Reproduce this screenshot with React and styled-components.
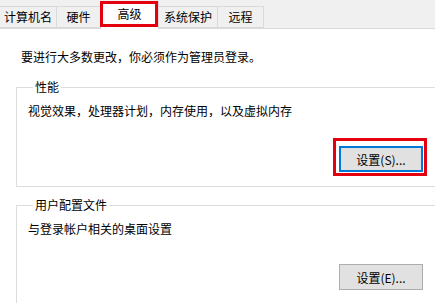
import React from "react";
import styled, { createGlobalStyle } from "styled-components";

const GlobalStyle = createGlobalStyle`
  html, body {
    margin: 0;
    padding: 0;
    background: #ffffff;
  }
  body {
    font-family: "Noto Sans CJK SC", "Liberation Sans", sans-serif;
    font-size: 12px;
    color: #000;
  }
`;

const tabs = [
  { label: "计算机名", width: 57 },
  { label: "硬件", width: 45 },
  { label: "高级", width: 59, active: true },
  { label: "系统保护", width: 60 },
  { label: "远程", width: 47 },
];

const Dialog = styled.div`
  width: 435px;
  height: 303px;
  overflow: hidden;
  background: #ffffff;
`;

const TabStrip = styled.div`
  display: flex;
  align-items: flex-end;
  height: 29px;
  background: #f0f0f0;
  border-bottom: 1px solid #d9d9d9;
  box-sizing: border-box;
`;

const Tab = styled.div`
  position: relative;
  display: flex;
  align-items: center;
  justify-content: center;
  box-sizing: border-box;
  width: ${(p) => p.$width}px;
  height: ${(p) => (p.$active ? 28 : 22)}px;
  margin-bottom: ${(p) => (p.$active ? -1 : 0)}px;
  margin-left: ${(p) => (p.$first ? 0 : -1)}px;
  padding-bottom: ${(p) => (p.$active ? 4 : 0)}px;
  background: ${(p) => (p.$active ? "#ffffff" : "#f0f0f0")};
  border: 1px solid #d9d9d9;
  border-bottom: ${(p) => (p.$active ? "none" : "1px solid #d9d9d9")};
  border-left: ${(p) => (p.$first ? "none" : "1px solid #d9d9d9")};
  z-index: ${(p) => (p.$active ? 2 : 1)};
  line-height: 16px;
  white-space: nowrap;

  ${(p) =>
    p.$active &&
    `
    &::after {
      content: "";
      position: absolute;
      left: -1px;
      right: 0;
      top: -1px;
      bottom: 2px;
      border: 3px solid #e3000f;
    }
  `}
`;

const Panel = styled.div`
  padding: 20px 0 0 0;
`;

const Intro = styled.p`
  margin: 0 0 15px 21px;
  line-height: 16px;
`;

const Group = styled.fieldset`
  margin: 0 -12px ${(p) => p.$gap || 0}px 16px;
  padding: 9px 23px 14px 10px;
  border: 1px solid #dcdcdc;
  min-width: 0;
  display: flex;
  flex-direction: column;
`;

const Legend = styled.legend`
  margin-left: 6px;
  padding: 0 2px;
  line-height: 14px;
`;

const Description = styled.div`
  line-height: 16px;
  padding-left: 1px;
`;

const ButtonRow = styled.div`
  display: flex;
  justify-content: flex-end;
  margin-top: 27px;
`;

const Button = styled.button`
  position: relative;
  width: 84px;
  height: 26px;
  box-sizing: border-box;
  background: #e1e1e1;
  border: ${(p) => (p.$focused ? "2px solid #0078d7" : "1px solid #adadad")};
  font-family: "Noto Sans CJK SC", "Liberation Sans", sans-serif;
  font-size: 12px;
  color: #000;
  padding: 0;

  ${(p) =>
    p.$marked &&
    `
    &::after {
      content: "";
      position: absolute;
      left: -8px;
      right: -6px;
      top: -10px;
      bottom: -6px;
      border: 3px solid #e3000f;
    }
  `}
`;

export default function App() {
  return (
    <Dialog>
      <GlobalStyle />
      <TabStrip>
        {tabs.map((t, i) => (
          <Tab key={t.label} $width={t.width} $active={t.active} $first={i === 0}>
            {t.label}
          </Tab>
        ))}
      </TabStrip>
      <Panel>
        <Intro>要进行大多数更改，你必须作为管理员登录。</Intro>
        <Group $gap={11}>
          <Legend>性能</Legend>
          <Description>视觉效果，处理器计划，内存使用，以及虚拟内存</Description>
          <ButtonRow>
            <Button $focused $marked>设置(S)...</Button>
          </ButtonRow>
        </Group>
        <Group>
          <Legend>用户配置文件</Legend>
          <Description>与登录帐户相关的桌面设置</Description>
          <ButtonRow>
            <Button>设置(E)...</Button>
          </ButtonRow>
        </Group>
      </Panel>
    </Dialog>
  );
}
